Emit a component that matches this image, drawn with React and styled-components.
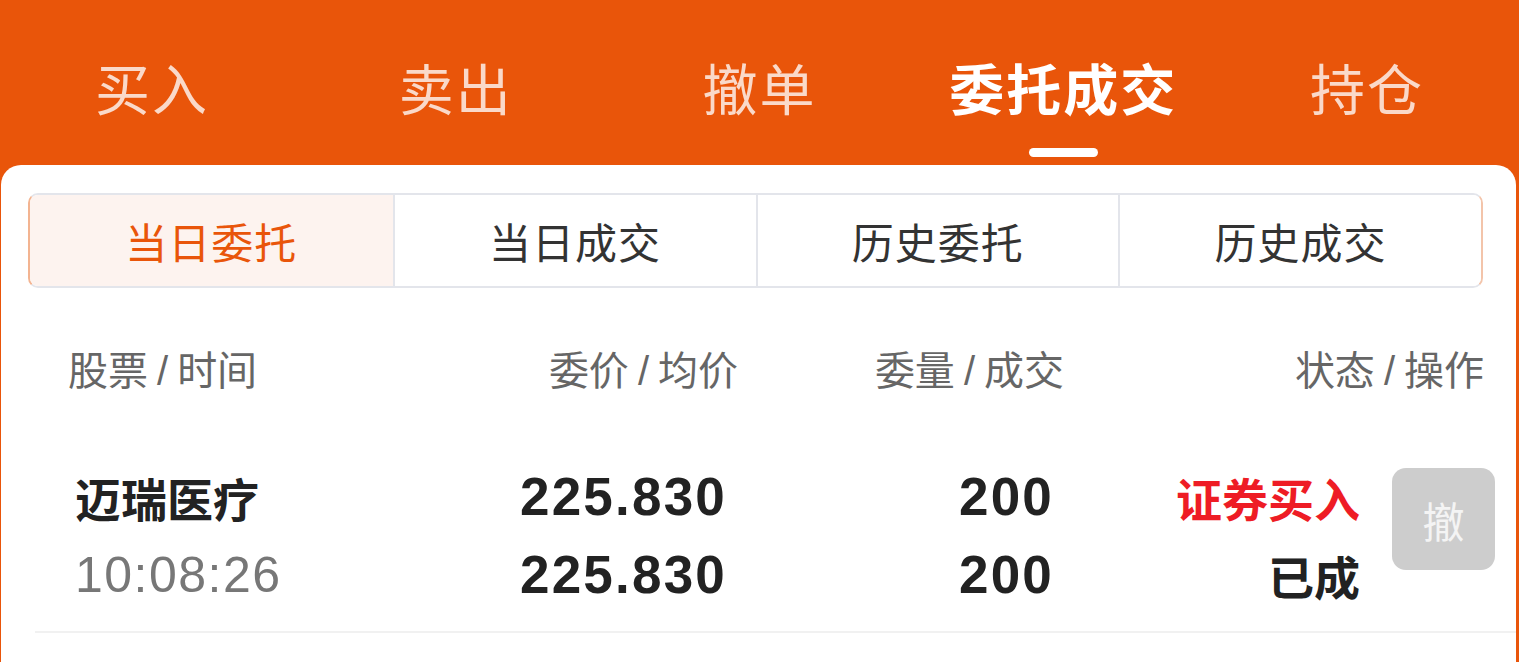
import React, { useState } from "react";
import styled, { createGlobalStyle } from "styled-components";

const GlobalStyle = createGlobalStyle`
  html, body {
    margin: 0;
    padding: 0;
    background: #ffffff;
  }
  body {
    font-family: "Noto Sans CJK SC", "Noto Sans", sans-serif;
    -webkit-font-smoothing: antialiased;
  }
`;

const ORANGE = "#e9550a";

const Page = styled.div`
  background: ${ORANGE};
  min-height: 100vh;
  display: flex;
  flex-direction: column;
`;

const TopTabs = styled.nav`
  display: grid;
  grid-template-columns: repeat(5, 1fr);
  height: 165px;
`;

const TopTab = styled.div`
  display: flex;
  flex-direction: column;
  align-items: center;
  padding-top: 59px;
  cursor: pointer;
`;

const TopLabel = styled.span`
  font-size: 55px;
  line-height: 1;
  font-weight: ${(p) => (p.$active ? 700 : 400)};
  color: ${(p) => (p.$active ? "#ffffff" : "rgba(255, 255, 255, 0.78)")};
  letter-spacing: 2px;
`;

const Indicator = styled.span`
  margin-top: 34px;
  width: 69px;
  height: 9px;
  border-radius: 5px;
  background: #ffffff;
`;

const Card = styled.section`
  flex: 1;
  background: #ffffff;
  border-radius: 20px 20px 0 0;
  margin: 0 3px 0 1px;
  padding-top: 28px;
`;

const Segments = styled.div`
  display: grid;
  grid-template-columns: repeat(4, 1fr);
  height: 95px;
  margin: 0 33px 0 27px;
  border: 2px solid #e3e5eb;
  border-left-color: #f3b491;
  border-right-color: #f3c4aa;
  border-radius: 10px;
  overflow: hidden;
  box-sizing: border-box;
`;

const Segment = styled.div`
  display: flex;
  align-items: center;
  justify-content: center;
  font-size: 42px;
  letter-spacing: 1px;
  color: ${(p) => (p.$active ? ORANGE : "#333333")};
  background: ${(p) => (p.$active ? "#fdf3ef" : "#ffffff")};
  & + & {
    border-left: 2px solid #e3e5eb;
  }
  cursor: pointer;
`;

const HeadRow = styled.div`
  display: grid;
  grid-template-columns: 340px 330px 326px 1fr;
  padding: 0 32px 0 67px;
  margin-top: 60px;
  font-family: "Liberation Sans", "Noto Sans CJK SC", sans-serif;
  font-size: 40px;
  line-height: 46px;
  color: #666666;
`;

const HeadCell = styled.div`
  text-align: ${(p) => (p.$right ? "right" : "left")};
  white-space: nowrap;
`;

const Slash = styled.span`
  margin: 0 9px;
`;

const OrderRow = styled.div`
  display: grid;
  grid-template-columns: 333px 319px 327px 1fr;
  padding: 0 21px 19px 74px;
  margin-top: 64px;
  position: relative;
  &::after {
    content: "";
    position: absolute;
    left: 34px;
    right: 0;
    bottom: 0;
    height: 2px;
    background: #f1f1f1;
  }
`;

const Stack = styled.div`
  display: flex;
  flex-direction: column;
  align-items: ${(p) => (p.$right ? "flex-end" : "flex-start")};
`;

const Line = styled.div`
  height: 78px;
  line-height: 78px;
  white-space: nowrap;
`;

const Name = styled(Line)`
  font-size: 46px;
  font-weight: 700;
  color: #222222;
`;

const Time = styled(Line)`
  font-family: "Liberation Sans", sans-serif;
  font-size: 50px;
  letter-spacing: 1.5px;
  color: #777777;
`;

const Num = styled(Line)`
  font-family: "Liberation Sans", sans-serif;
  font-size: 53px;
  font-weight: 700;
  letter-spacing: 2.2px;
  color: #222222;
`;

const Status = styled(Line)`
  font-size: 46px;
  font-weight: 700;
  color: ${(p) => (p.$red ? "#ee1c25" : "#222222")};
`;

const StatusCell = styled.div`
  display: flex;
  justify-content: flex-end;
  gap: 32px;
`;

const CancelButton = styled.button`
  margin-top: 10px;
  width: 103px;
  height: 102px;
  border: none;
  border-radius: 14px;
  background: #cdcdcd;
  color: #f4f4f4;
  font-family: "Noto Sans CJK SC", sans-serif;
  font-size: 42px;
  padding: 0;
`;

const topTabs = ["买入", "卖出", "撤单", "委托成交", "持仓"];
const segments = ["当日委托", "当日成交", "历史委托", "历史成交"];

function Head({ a, b, right }) {
  return (
    <HeadCell $right={right}>
      {a}
      <Slash>/</Slash>
      {b}
    </HeadCell>
  );
}

export default function App() {
  const [tab, setTab] = useState(3);
  const [seg, setSeg] = useState(0);

  return (
    <Page>
      <GlobalStyle />
      <TopTabs>
        {topTabs.map((t, i) => (
          <TopTab key={t} onClick={() => setTab(i)}>
            <TopLabel $active={i === tab}>{t}</TopLabel>
            {i === tab && <Indicator />}
          </TopTab>
        ))}
      </TopTabs>
      <Card>
        <Segments>
          {segments.map((s, i) => (
            <Segment key={s} $active={i === seg} onClick={() => setSeg(i)}>
              {s}
            </Segment>
          ))}
        </Segments>
        <HeadRow>
          <Head a="股票" b="时间" />
          <Head a="委价" b="均价" right />
          <Head a="委量" b="成交" right />
          <Head a="状态" b="操作" right />
        </HeadRow>
        <OrderRow>
          <Stack>
            <Name>迈瑞医疗</Name>
            <Time>10:08:26</Time>
          </Stack>
          <Stack $right>
            <Num>225.830</Num>
            <Num>225.830</Num>
          </Stack>
          <Stack $right>
            <Num>200</Num>
            <Num>200</Num>
          </Stack>
          <StatusCell>
            <Stack $right>
              <Status $red>证券买入</Status>
              <Status>已成</Status>
            </Stack>
            <CancelButton>撤</CancelButton>
          </StatusCell>
        </OrderRow>
      </Card>
    </Page>
  );
}
